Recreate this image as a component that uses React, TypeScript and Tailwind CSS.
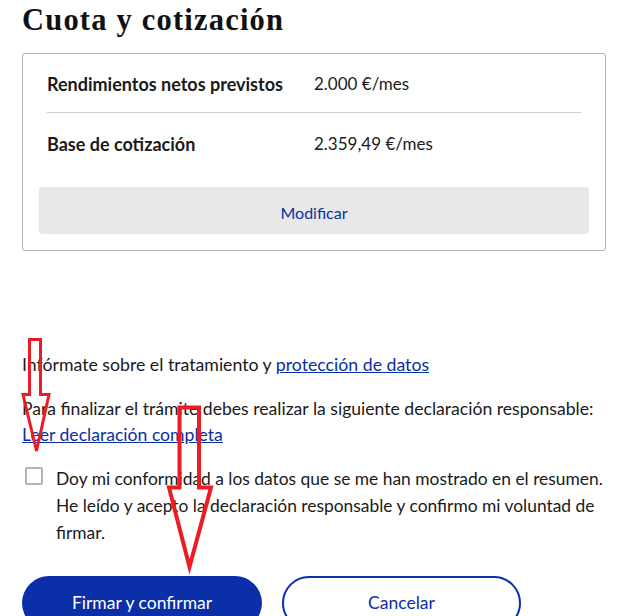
import React from "react";

export default function App() {
  return (
    <div className="relative w-[641px] h-[616px] overflow-hidden bg-white text-[#1a1a1a]" style={{ fontFamily: "Lato, 'Noto Sans', sans-serif" }}>
      <div className="pl-[22px] pr-[35px]">
        <h1 className="pt-[2px] text-[30.5px] leading-[36px] font-bold tracking-[1.2px] text-[#111]" style={{ fontFamily: "'Liberation Serif', 'DejaVu Serif', serif" }}>
          Cuota y cotización
        </h1>

        <div className="mt-[15px] rounded-[3px] border border-[#b3b3b3] pb-[16px]">
          <div className="px-[24px]">
            <div className="flex h-[59px] items-center border-b border-[#cfcfcf] pt-[2px]">
              <span className="w-[267px] text-[18px] font-bold">Rendimientos netos previstos</span>
              <span className="text-[17px]">2.000 €/mes</span>
            </div>
            <div className="flex h-[60px] items-center pt-[2px]">
              <span className="w-[267px] text-[18px] font-bold">Base de cotización</span>
              <span className="text-[17px]">2.359,49 €/mes</span>
            </div>
          </div>
          <div className="mx-[16px] mt-[14px] flex h-[47px] items-center justify-center rounded-[4px] bg-[#e8e8e8] pt-[4px] text-[16px] text-[#0a2fa0]">
            Modificar
          </div>
        </div>

        <p className="mt-[101px] text-[17.7px] leading-[26px]">
          Infórmate sobre el tratamiento y{" "}
          <a className="text-[#0a2fa0] underline">protección de datos</a>
        </p>

        <p className="mt-[18px] text-[17.6px] leading-[26px]">
          Para finalizar el trámite debes realizar la siguiente declaración responsable:
          <br />
          <a className="text-[#0a2fa0] underline">Leer declaración completa</a>
        </p>

        <div className="mt-[17px] flex gap-[13px]">
          <div className="mt-[2px] ml-[3px] h-[18px] w-[18px] shrink-0 rounded-[2px] border-2 border-[#b5b5b5]" />
          <p className="whitespace-nowrap text-[17.4px] leading-[27px]">
            Doy mi conformidad a los datos que se me han mostrado en el resumen.
            <br />
            He leído y acepto la declaración responsable y confirmo mi voluntad de
            <br />
            firmar.
          </p>
        </div>

        <div className="mt-[30px] flex gap-[20px]">
          <button className="flex h-[54px] w-[240px] items-center justify-center rounded-full bg-[#0a2fa8] text-[17.5px] text-white">
            Firmar y confirmar
          </button>
          <button className="flex h-[54px] w-[239px] items-center justify-center rounded-full border-2 border-[#0a2fa8] text-[17.5px] text-[#0a2fa8]">
            Cancelar
          </button>
        </div>
      </div>

      <svg className="pointer-events-none absolute left-0 top-0" width="641" height="616" viewBox="0 0 641 616">
        <path d="M29.5 339.5 H40.5 V394.5 H49 L36.5 451 L23 394.5 H29.5 Z" fill="none" stroke="#ec1c24" strokeWidth="3" strokeLinejoin="miter" />
        <path d="M179.5 407.5 H199 V487.5 H211 L189.5 567 L169 487.5 H179.5 Z" fill="none" stroke="#ec1c24" strokeWidth="4" strokeLinejoin="miter" />
      </svg>
    </div>
  );
}
